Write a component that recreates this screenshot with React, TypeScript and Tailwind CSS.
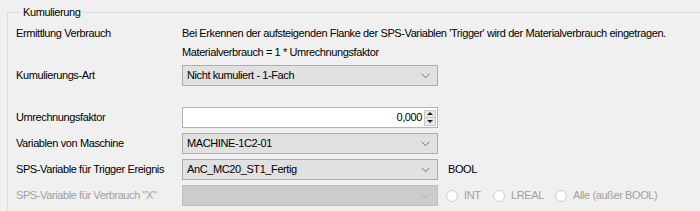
import React from "react";

const font = { fontFamily: '"Liberation Sans", Arial, sans-serif' };

function Chevron({ disabled }: { disabled?: boolean }) {
  return (
    <svg width="9" height="6" viewBox="0 0 9 6" className="shrink-0">
      <path
        d="M0.5 0.8 L4.5 4.6 L8.5 0.8"
        fill="none"
        stroke={disabled ? "#b0b0b0" : "#707070"}
        strokeWidth="1"
      />
    </svg>
  );
}

function Combo({ value, disabled }: { value?: string; disabled?: boolean }) {
  return (
    <div
      className={
        "flex items-center justify-between w-[256px] h-[21px] border pl-[4px] pr-[7px] " +
        (disabled ? "bg-[#cccccc] border-[#bfbfbf]" : "bg-[#e1e1e1] border-[#adadad]")
      }
    >
      <span className="text-[11px] text-black">{value}</span>
      <Chevron disabled={disabled} />
    </div>
  );
}

function Radio({ label, w }: { label: string; w: string }) {
  return (
    <div className={"flex items-center gap-[6px] " + w}>
      <span className="w-[12px] h-[12px] rounded-full border border-[#cccccc] bg-white" />
      <span className="text-[11px] text-[#a0a0a0]">{label}</span>
    </div>
  );
}

export default function App() {
  return (
    <div className="w-[700px] h-[211px] overflow-hidden bg-[#f0f0f0] tracking-[-0.4px]" style={font}>
      <fieldset className="ml-[7px] mt-[6px] w-[740px] h-[260px] border border-[#dcdcdc] pl-[8px]">
        <legend className="ml-[5px] px-[2px] text-[11px] leading-[13px] text-black">
          Kumulierung
        </legend>

        <div className="text-[11px] text-black">
          {/* Ermittlung */}
          <div className="flex items-center h-[20px] mt-[4px]">
            <span className="w-[166px]">Ermittlung Verbrauch</span>
            <span>
              Bei Erkennen der aufsteigenden Flanke der SPS-Variablen 'Trigger' wird der Materialverbrauch eingetragen.
            </span>
          </div>
          <div className="flex items-center h-[18px]">
            <span className="w-[166px]" />
            <span>Materialverbrauch = 1 * Umrechnungsfaktor</span>
          </div>

          {/* Kumulierungs-Art */}
          <div className="flex items-center h-[21px] mt-[4px]">
            <span className="w-[166px]">Kumulierungs-Art</span>
            <Combo value="Nicht kumuliert - 1-Fach" />
          </div>

          {/* Umrechnungsfaktor */}
          <div className="flex items-center h-[21px] mt-[21px]">
            <span className="w-[166px]">Umrechnungsfaktor</span>
            <div className="flex items-center w-[256px] h-[21px] bg-white border border-[#b4b4b4] pr-[1px]">
              <span className="flex-1 text-right pr-[2px]">0,000</span>
              <div className="flex flex-col w-[12px] h-[16px] border border-[#c8c8c8] bg-[#e8e8e8]">
                <div className="flex-1 flex items-center justify-center border-b border-[#c8c8c8]">
                  <svg width="6" height="3" viewBox="0 0 6 3">
                    <path d="M0 3 L3 0 L6 3 Z" fill="#202020" />
                  </svg>
                </div>
                <div className="flex-1 flex items-center justify-center">
                  <svg width="6" height="3" viewBox="0 0 6 3">
                    <path d="M0 0 L3 3 L6 0 Z" fill="#202020" />
                  </svg>
                </div>
              </div>
            </div>
          </div>

          {/* Variablen von Maschine */}
          <div className="flex items-center h-[21px] mt-[5px]">
            <span className="w-[166px]">Variablen von Maschine</span>
            <Combo value="MACHINE-1C2-01" />
          </div>

          {/* Trigger */}
          <div className="flex items-center h-[21px] mt-[5px]">
            <span className="w-[166px]">SPS-Variable für Trigger Ereignis</span>
            <Combo value="AnC_MC20_ST1_Fertig" />
            <span className="ml-[10px]">BOOL</span>
          </div>

          {/* Verbrauch X */}
          <div className="flex items-center h-[21px] mt-[5px]">
            <span className="w-[166px] text-[#a0a0a0]">SPS-Variable für Verbrauch "X"</span>
            <Combo disabled />
            <div className="flex items-center ml-[8px]">
              <Radio label="INT" w="w-[47px]" />
              <Radio label="LREAL" w="w-[62px]" />
              <Radio label="Alle (außer BOOL)" w="w-[110px]" />
            </div>
          </div>
        </div>
      </fieldset>
    </div>
  );
}
